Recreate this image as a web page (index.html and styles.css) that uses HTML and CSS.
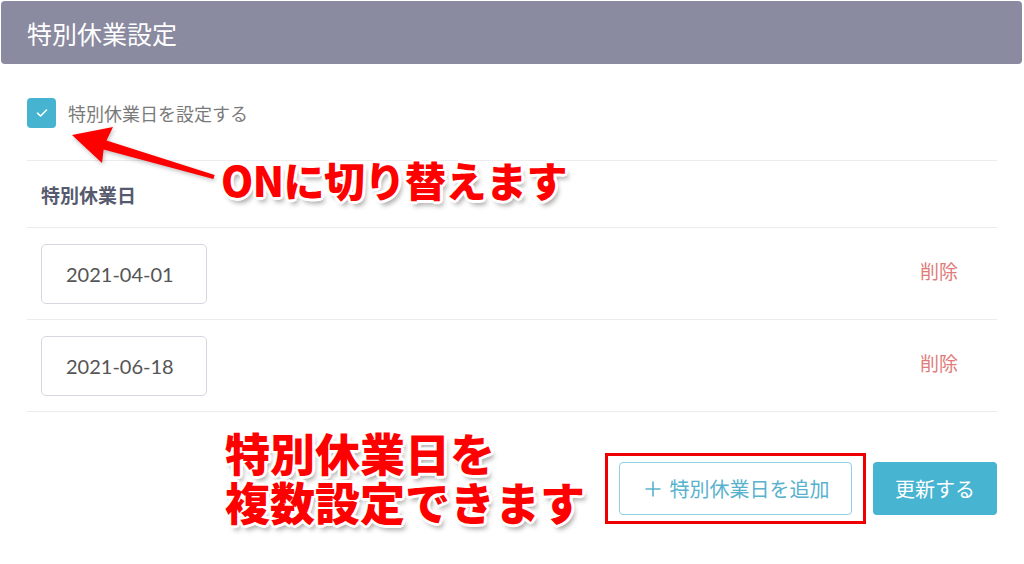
FILE: index.html
```html
<!DOCTYPE html>
<html lang="ja">
<head>
    <meta charset="UTF-8">
    <meta name="viewport" content="width=device-width, initial-scale=1.0">
    <title>特別休業設定</title>
    <link rel="stylesheet" href="styles.css">
</head>
<body>
    <div id="holiday-settings">
        <div class="panel-header">特別休業設定</div>
        <div class="panel-body">
            <label class="toggle">
                <span class="checkbox">
                    <svg width="12" height="10" viewBox="0 0 12 10"><path d="M1.5 5.2 L4.6 8 L10.5 2" fill="none" stroke="#fff" stroke-width="1.6" stroke-linecap="round" stroke-linejoin="round"/></svg>
                </span>
                特別休業日を設定する
            </label>

            <div class="holiday-table">
                <div class="table-head">特別休業日</div>
                <div class="table-row">
                    <input class="date-input" type="text" value="2021-04-01" readonly>
                    <a class="delete-link" href="#">削除</a>
                </div>
                <div class="table-row">
                    <input class="date-input" type="text" value="2021-06-18" readonly>
                    <a class="delete-link" href="#">削除</a>
                </div>
            </div>

            <div class="actions">
                <span class="highlight">
                    <button class="btn-add">
                        <svg class="plus" width="18" height="18" viewBox="0 0 18 18"><path d="M9 1.5 V16.5 M1.5 9 H16.5" stroke="#58b2cd" stroke-width="1.6" fill="none"/></svg>
                        特別休業日を追加
                    </button>
                </span>
                <button class="btn-save">更新する</button>
            </div>
        </div>

        <!-- annotations -->
        <svg class="arrow" width="1024" height="564" viewBox="0 0 1024 564">
            <polygon points="72,134 113,126 106.5,139.5 214.6,174 213.4,178 103.6,148.5 102,162" fill="#f00"/>
        </svg>
        <div class="note note-on">ONに切り替えます</div>
        <div class="note note-multi">
            <div class="note-line">特別休業日を</div>
            <div class="note-line">複数設定できます</div>
        </div>
    </div>
</body>
</html>
```

FILE: styles.css
```css
body {
    margin: 0;
    font-family: Lato, "Noto Sans CJK JP", sans-serif;
    background: #fff;
    overflow: hidden;
}

#holiday-settings {
    position: relative;
    width: 1024px;
    height: 564px;
}

.panel-header {
    margin: 1px 2px 0 1px;
    height: 63px;
    border-radius: 4px;
    background-color: #8a8aa0;
    color: #fff;
    font-size: 25px;
    padding-left: 26px;
    display: flex;
    align-items: center;
}

.panel-body {
    padding: 0 27px;
}

.toggle {
    margin-top: 34px;
    height: 30px;
    display: flex;
    align-items: center;
    gap: 12px;
    color: #7a7a7a;
    font-size: 18px;
}

.checkbox {
    width: 29px;
    height: 30px;
    border-radius: 4px;
    background-color: #46b3d1;
    display: flex;
    justify-content: center;
    align-items: center;
}

.holiday-table {
    margin-top: 32px;
    border-top: 1px solid #ececf0;
}

.table-head {
    height: 66px;
    padding-left: 14px;
    display: flex;
    align-items: center;
    font-size: 19px;
    font-weight: bold;
    color: #565a6e;
    border-bottom: 1px solid #ececf0;
}

.table-row {
    height: 91px;
    padding: 0 39px 0 14px;
    display: flex;
    align-items: center;
    justify-content: space-between;
    border-bottom: 1px solid #ececf0;
}

.date-input {
    width: 166px;
    height: 60px;
    box-sizing: border-box;
    border: 1px solid #d6d6e2;
    border-radius: 5px;
    padding: 0 0 0 24px;
    font-family: Lato, sans-serif;
    font-size: 20px;
    color: #555;
    outline: none;
}

.delete-link {
    color: #e07b7b;
    text-decoration: none;
    font-size: 19px;
    margin-top: -6px;
}

.actions {
    margin-top: 50px;
    display: flex;
    justify-content: flex-end;
    gap: 21px;
}

.highlight {
    position: relative;
    display: flex;
}

.highlight::after {
    content: "";
    position: absolute;
    top: -9px;
    bottom: -9px;
    left: -14px;
    right: -14px;
    border: 3px solid #ee0000;
    box-sizing: border-box;
}

.btn-add {
    width: 233px;
    height: 53px;
    border: 1px solid #8ecfe0;
    border-radius: 4px;
    background: #fff;
    color: #58b2cd;
    font-family: Lato, "Noto Sans CJK JP", sans-serif;
    font-size: 20px;
    padding: 0 0 0 2px;
    display: flex;
    align-items: center;
    justify-content: center;
    gap: 8px;
    cursor: pointer;
}

.btn-save {
    width: 124px;
    height: 53px;
    border: none;
    border-radius: 4px;
    background-color: #47b4d1;
    color: #fff;
    font-family: Lato, "Noto Sans CJK JP", sans-serif;
    font-size: 20px;
    padding: 0;
    cursor: pointer;
}

.arrow {
    position: absolute;
    top: 0;
    left: 0;
    pointer-events: none;
    filter: drop-shadow(1px 2px 2px rgba(0, 0, 0, 0.25));
}

.note {
    position: absolute;
    font-family: "Noto Sans CJK JP", sans-serif;
    font-weight: 900;
    color: #f00;
    white-space: nowrap;
    text-shadow:
        3px 0 0 #fff, -3px 0 0 #fff, 0 3px 0 #fff, 0 -3px 0 #fff,
        2px 2px 0 #fff, -2px 2px 0 #fff, 2px -2px 0 #fff, -2px -2px 0 #fff,
        3px 5px 5px rgba(0, 0, 0, 0.35);
}

.note-on {
    left: 221px;
    top: 150px;
    font-size: 41px;
    line-height: 56px;
    letter-spacing: -0.5px;
}

.note-multi {
    left: 225px;
    top: 427px;
    font-size: 45px;
    letter-spacing: 0;
}

.note-line {
    height: 49px;
    line-height: 49px;
}
```
